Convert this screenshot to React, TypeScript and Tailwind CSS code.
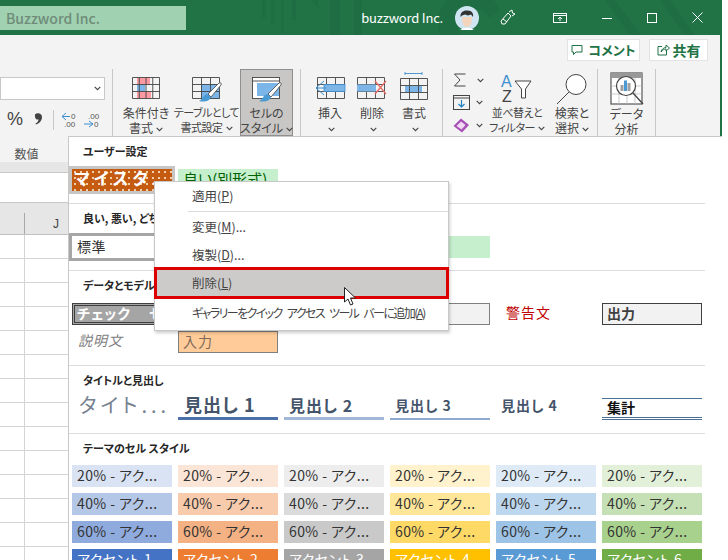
import React from "react";

const FONT = { fontFamily: '"Noto Sans CJK JP", sans-serif', fontFeatureSettings: '"palt"' };

function Chev({ className = "" }: { className?: string }) {
  return (
    <svg width="7" height="5" viewBox="0 0 7 5" className={"inline-block " + className}>
      <path d="M0.7 0.8 L3.5 3.6 L6.3 0.8" fill="none" stroke="#444" strokeWidth="1.1" />
    </svg>
  );
}

function Brush({ x, y }: { x: number; y: number }) {
  return (
    <g transform={`translate(${x} ${y})`}>
      <path d="M9 12 L20 1 C21.5 0 23 1.5 22 3 L12 15 Z" fill="#fff" stroke="#555" strokeWidth="0.9" />
      <path d="M8 12 C4 13 4 17 0 19 C5 20.5 11 19 12 15 Z" fill="#4a9bd4" />
    </g>
  );
}

function GridLines({ w = 28, h = 22, cols = 3, rows = 3 }: { w?: number; h?: number; cols?: number; rows?: number }) {
  const out: React.ReactNode[] = [];
  for (let i = 0; i <= cols; i++) out.push(<line key={"c" + i} x1={0.5 + (i * (w - 1)) / cols} x2={0.5 + (i * (w - 1)) / cols} y1={0.5} y2={h - 0.5} stroke="#444" strokeWidth="0.9" />);
  for (let i = 0; i <= rows; i++) out.push(<line key={"r" + i} y1={0.5 + (i * (h - 1)) / rows} y2={0.5 + (i * (h - 1)) / rows} x1={0.5} x2={w - 0.5} stroke="#444" strokeWidth="0.9" />);
  return <>{out}</>;
}

function CondIcon() {
  return (
    <svg width="30" height="24" viewBox="0 0 30 24">
      <g transform="translate(1 1)">
        <rect x="5" y="0.5" width="13" height="7" fill="#ff9aa2" />
        <rect x="5" y="7.5" width="8" height="7" fill="#7cb5e8" />
        <rect x="5" y="14.5" width="14" height="7" fill="#ff9aa2" />
        <GridLines cols={4} />
      </g>
    </svg>
  );
}

function TableIcon() {
  return (
    <svg width="32" height="26" viewBox="0 0 32 26">
      <g transform="translate(1 1)">
        <rect x="9" y="7" width="19" height="15" fill="#7cb5e8" />
        <GridLines />
      </g>
      <Brush x={8} y={6} />
    </svg>
  );
}

function StyleIcon() {
  return (
    <svg width="32" height="26" viewBox="0 0 32 26">
      <g transform="translate(1 1)">
        <rect x="0.5" y="0.5" width="27" height="21" fill="#fff" stroke="#444" strokeWidth="0.9" />
        <line x1="0.5" x2="27.5" y1="4" y2="4" stroke="#444" strokeWidth="0.9" />
        <rect x="5" y="6" width="22" height="13" fill="#7cb5e8" />
      </g>
      <Brush x={8} y={6} />
    </svg>
  );
}

function InsertIcon() {
  return (
    <svg width="32" height="24" viewBox="0 0 32 24">
      <g transform="translate(3 1)">
        <GridLines />
      </g>
      <rect x="10" y="8.5" width="21" height="7" fill="#7cb5e8" stroke="#3f8fcf" strokeWidth="0.8" />
      <path d="M10 5 L2 12 L10 19 M2 12 H12" fill="none" stroke="#3f8fcf" strokeWidth="1" />
    </svg>
  );
}

function DeleteIcon() {
  return (
    <svg width="32" height="24" viewBox="0 0 32 24">
      <g transform="translate(1 1)">
        <GridLines />
      </g>
      <rect x="1" y="8.5" width="19" height="7" fill="#7cb5e8" />
      <path d="M19 5 L30 18 M30 5 L19 18" stroke="#ea6b66" strokeWidth="1.3" />
    </svg>
  );
}

function FormatIcon() {
  return (
    <svg width="30" height="29" viewBox="0 0 30 29">
      <path d="M6 1.5 H23 M6 0 V3 M23 0 V3" stroke="#3f8fcf" strokeWidth="0.9" fill="none" />
      <g transform="translate(1 6)">
        <rect x="5" y="8" width="17" height="6" fill="#7cb5e8" />
        <GridLines />
      </g>
    </svg>
  );
}

function SortIcon() {
  return (
    <svg width="32" height="32" viewBox="0 0 32 32" style={{ fontFamily: '"Liberation Sans", sans-serif' }}>
      <text x="0" y="14" fontSize="16" fill="#3f8fcf">A</text>
      <text x="1" y="29" fontSize="16" fill="#444">Z</text>
      <path d="M14 8 H30 L24.5 16 V25 H20.5 V16 Z" fill="#fff" stroke="#444" strokeWidth="1" />
    </svg>
  );
}

function SearchIcon() {
  return (
    <svg width="32" height="32" viewBox="0 0 32 32">
      <circle cx="20" cy="11.5" r="10" fill="#fff" stroke="#444" strokeWidth="1" />
      <path d="M13 19 L1 31" stroke="#444" strokeWidth="1" />
    </svg>
  );
}

function AnalysisIcon() {
  return (
    <svg width="34" height="34" viewBox="0 0 34 34">
      <rect x="1" y="1" width="31" height="31" fill="#fff" stroke="#555" strokeWidth="1.2" />
      <rect x="1" y="1" width="31" height="5" fill="#999" />
      <path d="M1 14 H32 M1 22 H32 M9 6 V32 M17 6 V32 M25 6 V32" stroke="#bbb" strokeWidth="0.8" />
      <circle cx="16" cy="14" r="9.5" fill="#fff" stroke="#444" strokeWidth="1.2" />
      <rect x="10.5" y="13" width="3" height="6" fill="#a0a0a0" />
      <rect x="14" y="8.5" width="3" height="10.5" fill="#4a9bd4" />
      <rect x="17.5" y="11" width="3" height="8" fill="#a0a0a0" />
      <path d="M23 21 L33 32" stroke="#444" strokeWidth="1.3" />
    </svg>
  );
}

function RibbonBtn({ w, icon, top, bottom, chev = true, active = false, tight = false }: { w: string; icon: React.ReactNode; top?: string; bottom?: string; chev?: boolean; active?: boolean; tight?: boolean }) {
  return (
    <div className={w + " h-[67px] flex flex-col items-center leading-[15px] text-[#444] whitespace-nowrap border " + (tight ? "text-[11px] tracking-[-0.5px] " : "text-[12px] ") + (active ? "bg-[#c9c7c5] border-[#8f8f8f]" : "border-transparent")}>
      <div className="h-[36px] pt-[6px] flex items-start justify-center">{icon}</div>
      <div className="h-[15px]">{top}</div>
      <div className="h-[15px]">
        {bottom}
        {chev && <Chev className="ml-[3px] mb-[1px]" />}
      </div>
    </div>
  );
}

const TILE = "h-[22px] w-[100px] whitespace-nowrap overflow-hidden";
const TXT = "text-[14px] leading-[20px] px-[5px] tracking-[0.4px]";

const TILES = [
  ["bg-[#dae3f3]", "bg-[#fbe5d6]", "bg-[#ededed]", "bg-[#fff2cc]", "bg-[#deebf7]", "bg-[#e2f0d9]"],
  ["bg-[#b4c7e7]", "bg-[#f8cbad]", "bg-[#dbdbdb]", "bg-[#ffe699]", "bg-[#bdd7ee]", "bg-[#c5e0b4]"],
  ["bg-[#8faadc]", "bg-[#f4b183]", "bg-[#c9c9c9]", "bg-[#ffd966]", "bg-[#9dc3e6]", "bg-[#a9d18e]"],
];
const ACCENTS = ["bg-[#4472c4]", "bg-[#ed7d31]", "bg-[#a5a5a5]", "bg-[#ffc000]", "bg-[#5b9bd5]", "bg-[#70ad47]"];

const ROWGRID = "grid grid-cols-[repeat(6,100px)] gap-x-[6px] pl-[3px]";

function Label({ children }: { children: React.ReactNode }) {
  return <div className="h-[30px] pl-[14px] pb-[1px] flex items-center text-[11px] font-bold text-[#262626] whitespace-nowrap">{children}</div>;
}

function Section({ h, children }: { h: string; children: React.ReactNode }) {
  return <div className={h + " w-[636px] border-b border-[#dcdcdc]"}>{children}</div>;
}

function MenuItem({ label, k, tail = "", size = "text-[12.5px]" }: { label: string; k: string; tail?: string; size?: string }) {
  return (
    <div className={"h-[28px] pl-[37px] flex items-center text-[#444] whitespace-pre " + size}>
      {label}(<u>{k}</u>){tail}
    </div>
  );
}

export default function App() {
  return (
    <div className="relative w-[722px] h-[560px] overflow-hidden bg-white" style={FONT}>
      {/* Title bar */}
      <div className="relative h-[35px] bg-[#217346] flex items-center overflow-hidden">
        <svg className="absolute left-[260px] top-0" width="440" height="35" viewBox="0 0 440 35">
          <g fill="#1f6d42">
            <rect x="2" y="0" width="4" height="18" />
            <rect x="11" y="0" width="4" height="24" />
            <rect x="21" y="0" width="3" height="33" />
            <rect x="32" y="0" width="4" height="20" />
            <path d="M52 0 L58 8 V0 Z" />
            <rect x="70" y="0" width="10" height="35" />
            <rect x="94" y="0" width="8" height="35" />
            <path d="M180 35 A22 22 0 0 1 240 10 L230 18 A14 14 0 0 0 200 35 Z" />
            <path d="M345 0 L370 35 H380 L355 0 Z" />
            <path d="M400 0 L425 35 H435 L410 0 Z" />
          </g>
        </svg>
        <div className="relative w-[186px] h-[24px] pl-[6px] bg-[#a0d1b1] text-[14px] leading-[24px] font-medium text-[#6f8c79]">Buzzword Inc.</div>
        <div className="relative ml-auto flex items-center h-[35px]">
          <span className="text-[13px] tracking-[-0.2px] text-white mr-[12px]">buzzword Inc.</span>
          <svg width="24" height="24" viewBox="0 0 24 24" className="mr-[20px]">
            <circle cx="12" cy="12" r="12" fill="#cfe6f2" />
            <path d="M7 11 C7 18 9 21 12 21 C15 21 17 18 17 11 Z" fill="#f3d5bd" />
            <path d="M5.5 11 C5 6 9 4 12 4.5 C16 4 19 7 18 11 L16 8.5 L13 9.5 L10 8.5 L7 9.5 Z" fill="#333" />
            <path d="M5 24 A12 12 0 0 1 19 24 Z" fill="#fff" />
          </svg>
          <svg width="18" height="18" viewBox="0 0 18 18" className="mr-[36px]" fill="none" stroke="#fff" strokeWidth="1">
            <path d="M2 12 L9 4 L12 7 L6 15 H3 Z M10 3 L13 1 L13.5 4 L16 5 L13 7 M4 10 L8 13" />
          </svg>
          <svg width="14" height="12" viewBox="0 0 14 12" className="mr-[35px]" fill="none" stroke="#fff" strokeWidth="1">
            <rect x="0.5" y="1.5" width="13" height="9" />
            <path d="M0.5 3.5 H13.5 M7 9 V5 M5 7 L7 5 L9 7" />
          </svg>
          <svg width="10" height="10" viewBox="0 0 10 10" className="mr-[35px]" stroke="#fff" strokeWidth="1">
            <path d="M0 5.5 H10" />
          </svg>
          <svg width="10" height="10" viewBox="0 0 10 10" className="mr-[35px]" fill="none" stroke="#fff" strokeWidth="1">
            <rect x="0.5" y="0.5" width="9" height="9" />
          </svg>
          <svg width="11" height="11" viewBox="0 0 11 11" className="mr-[19px]" stroke="#fff" strokeWidth="1">
            <path d="M0.5 0.5 L10.5 10.5 M10.5 0.5 L0.5 10.5" />
          </svg>
        </div>
      </div>

      {/* Ribbon */}
      <div className="h-[127px] bg-[#f3f3f3] border-r-2 border-[#217346]">
        <div className="h-[34px] flex justify-end items-start pt-[4px] pr-[12px] gap-[9px]">
          <div className="h-[22px] w-[73px] bg-white border border-[#e3e3e3] flex items-center justify-center gap-[5px] text-[13px] font-bold text-[#217346]">
            <svg width="12" height="12" viewBox="0 0 12 12" fill="none" stroke="#217346" strokeWidth="1"><path d="M1 1.5 H11 V8 H5 L2.5 10.5 V8 H1 Z" /></svg>
            コメント
          </div>
          <div className="h-[22px] w-[59px] bg-white border border-[#e3e3e3] flex items-center justify-center gap-[3px] text-[14px] font-bold text-[#217346]">
            <svg width="13" height="12" viewBox="0 0 13 12" fill="none" stroke="#217346" strokeWidth="1"><path d="M5 2.5 H1 V11 H9.5 V7 M4 8 C4.5 5 7 3.5 9 3.5 V1 L12.5 4 L9 7 V5 C7 5 5.5 6 4 8 Z" /></svg>
            共有
          </div>
        </div>
        <div className="h-[67px] flex">
          {/* Number group */}
          <div className="w-[113px] h-[67px] border-r border-[#c8c8c8] shrink-0">
            <div className="mt-[8px] w-[105px] h-[23px] bg-white border border-[#c8c8c8] flex items-center justify-end pr-[3px]">
              <Chev />
            </div>
            <div className="h-[36px] pt-[3px] flex items-center text-[#444]">
              <span className="ml-[2px] w-[26px] text-[18px] text-center" style={{ fontFamily: '"Liberation Sans", sans-serif' }}>%</span>
              <svg width="9" height="12" viewBox="0 0 9 12" className="ml-[6px] -mt-[2px]">
                <path d="M1 1.5 C3 -0.5 8 0 8 4 C8 8 5 10.5 2 11.5 L1.5 10.5 C3.5 9.5 4.5 8 4.5 6.5 C2.5 7 0.5 5.5 1 1.5 Z" fill="#444" />
              </svg>
              <span className="ml-[10px] w-px h-[20px] bg-[#c8c8c8]" />
              <svg width="17" height="16" viewBox="0 0 17 16" className="ml-[7px]" style={{ fontFamily: '"Liberation Sans", sans-serif' }}>
                <path d="M5 1 L1 4.5 L5 8 M1 4.5 H9" fill="none" stroke="#3f8fcf" strokeWidth="1" />
                <text x="10" y="7" fontSize="8" fill="#555">0</text>
                <text x="3" y="15" fontSize="8" fill="#555">.00</text>
              </svg>
              <svg width="17" height="16" viewBox="0 0 17 16" className="ml-[6px]" style={{ fontFamily: '"Liberation Sans", sans-serif' }}>
                <text x="4" y="7" fontSize="8" fill="#555">.00</text>
                <path d="M5 9 L9 12 L5 15 M0 12 H9" fill="none" stroke="#3f8fcf" strokeWidth="1" />
                <text x="10" y="15" fontSize="8" fill="#555">0</text>
              </svg>
            </div>
          </div>
          {/* Styles group */}
          <div className="w-[188px] border-r border-[#c8c8c8] shrink-0 flex pl-[6px]">
            <RibbonBtn w="w-[54px]" icon={<CondIcon />} top="条件付き" bottom="書式" />
            <RibbonBtn w="w-[67px]" tight icon={<TableIcon />} top="テーブルとして" bottom="書式設定" />
            <RibbonBtn w="w-[53px]" active icon={<StyleIcon />} top="セルの" bottom="スタイル" />
          </div>
          {/* Cells group */}
          <div className="w-[142px] border-r border-[#c8c8c8] shrink-0 flex pl-[8px]">
            <RibbonBtn w="w-[42px]" icon={<InsertIcon />} top="挿入" />
            <RibbonBtn w="w-[42px]" icon={<DeleteIcon />} top="削除" />
            <RibbonBtn w="w-[42px]" icon={<div className="-mt-[4px]"><FormatIcon /></div>} top="書式" />
          </div>
          {/* Editing group */}
          <div className="w-[155px] border-r border-[#c8c8c8] shrink-0 flex">
            <div className="w-[44px] h-[67px] flex flex-col pl-[10px] pt-[3px] gap-[5px]">
              <div className="h-[16px] flex items-center text-[#444]">
                <svg width="14" height="14" viewBox="0 0 14 14" fill="none" stroke="#444" strokeWidth="1"><path d="M12.5 1 H1.5 L7 7 L1.5 13 H12.5" /></svg>
                <Chev className="ml-[10px]" />
              </div>
              <div className="h-[18px] flex items-center">
                <svg width="17" height="15" viewBox="0 0 17 15" fill="none"><rect x="0.5" y="0.5" width="16" height="14" stroke="#444" /><path d="M0.5 3 H16.5" stroke="#444" /><path d="M8.5 5 V12 M5.5 9 L8.5 12 L11.5 9" stroke="#1f7ec4" strokeWidth="1.2" /></svg>
                <Chev className="ml-[6px]" />
              </div>
              <div className="h-[18px] flex items-center">
                <svg width="17" height="15" viewBox="0 0 17 15"><path d="M0.5 8 L8 0.5 L16 7 L9 14.5 Z" fill="#a64fb4" /><path d="M3.5 8 L8 3.5 L12.5 7 L8.5 11.5 Z" fill="#f1d9f4" /></svg>
                <Chev className="ml-[6px]" />
              </div>
            </div>
            <RibbonBtn w="w-[60px]" tight icon={<div className="-mt-[3px]"><SortIcon /></div>} top="並べ替えと" bottom="フィルター" />
            <RibbonBtn w="w-[50px]" icon={<div className="-mt-[3px]"><SearchIcon /></div>} top="検索と" bottom="選択" />
          </div>
          {/* Analysis */}
          <div className="w-[58px] border-r border-[#c8c8c8] shrink-0">
            <RibbonBtn w="w-[57px]" chev={false} icon={<div className="-mt-[4px]"><AnalysisIcon /></div>} top="データ" bottom="分析" />
          </div>
        </div>
        <div className="h-[26px] w-[53px] text-[12px] leading-[36px] text-[#555] text-center">数値</div>
      </div>

      {/* Formula area */}
      <div className="h-[11px] bg-[#e6e6e6] border-b border-[#c8c8c8]" />
      <div className="h-[30px] bg-white border-b border-[#c8c8c8]" />
      {/* Column header */}
      <div className="h-[32px] bg-[#e6e6e6] border-b border-[#c0c0c0] flex">
        <div className="w-[25px] mt-[10px] border-r border-[#a8a8a8]" />
        <div className="w-[35px] pt-[13px] text-[12px] leading-[16px] text-[#444] text-right pr-[1px]" style={{ fontFamily: '"Liberation Sans", sans-serif' }}>J</div>
      </div>
      {/* Grid */}
      <div>
        {Array.from({ length: 14 }).map((_, i) => (
          <div key={i} className="h-[24px] border-b border-[#d4d4d4] flex">
            <div className="w-[25px] border-r border-[#d4d4d4]" />
          </div>
        ))}
      </div>

      {/* Style gallery panel */}
      <div className="absolute left-[68px] top-[136px] w-[655px] h-[424px] bg-white border-l border-t border-r border-[#c8c8c8] text-[#333]">
        <Section h="h-[67px]">
          <Label>ユーザー設定</Label>
          <div className={ROWGRID + " pt-[2px]"}>
            <div className={TILE + " outline-[3px] outline-[#c8c6c4] bg-[#c55a11] text-white font-bold text-[17px] leading-[18px] pl-[2px] tracking-[4px] bg-[radial-gradient(#f3cfa9_1px,transparent_1px)] bg-[length:6px_6px]"}>マイスタ...</div>
            <div className={TILE + " bg-[#c6efce] text-[#006100] text-[15px] leading-[20px] px-[5px]"}>良い(別形式)</div>
          </div>
        </Section>
        <Section h="h-[67px]">
          <Label>良い, 悪い, どちらでもない</Label>
          <div className={ROWGRID + " pt-[2px]"}>
            <div className={TILE + " outline-[3px] outline-[#a6a6a6] bg-white " + TXT}>標準</div>
            <div className={TILE + " bg-[#ffc7ce]"} />
            <div className={TILE + " bg-[#ffeb9c]"} />
            <div className={TILE + " bg-[#c6efce]"} />
          </div>
        </Section>
        <Section h="h-[95px]">
          <Label>データとモデル</Label>
          <div className={ROWGRID + " pt-[2px] gap-y-[6px]"}>
            <div className={TILE + " bg-[#a5a5a5] border-[3px] border-double border-[#3f3f3f] text-white font-bold text-[14px] leading-[15px] px-[2px] tracking-[1px] [word-spacing:14px]"}>チェック セル</div>
            <div className={TILE + " bg-[#f2f2f2] border border-[#7f7f7f]"} />
            <div className={TILE + " bg-[#f2f2f2] border border-[#7f7f7f]"} />
            <div className={TILE + " bg-[#f2f2f2] border border-[#7f7f7f]"} />
            <div className={TILE + " text-[#c00000] text-[14px] leading-[18px] tracking-[1px] pl-[10px]"}>警告文</div>
            <div className={TILE + " bg-[#f2f2f2] border border-[#3f3f3f] font-bold text-[#3f3f3f] text-[14px] leading-[18px] px-[4px]"}>出力</div>
            <div className={TILE + " italic text-[#7f7f7f] text-[14px] leading-[18px] pl-[6px] tracking-[1px]"}>説明文</div>
            <div className={TILE + " bg-[#ffcc99] border border-[#7f7f7f] text-[#7f6a5a] text-[14px] leading-[18px] px-[4px] tracking-[1px]"}>入力</div>
          </div>
        </Section>
        <Section h="h-[68px]">
          <Label>タイトルと見出し</Label>
          <div className={ROWGRID + " -mt-[4px]"}>
            <div className="h-[28px] pl-[7px] text-[20px] leading-[26px] tracking-[4px] text-[#76818f] whitespace-nowrap">タイト...</div>
            <div className="h-[28px] px-[6px] text-[18px] leading-[25px] tracking-[1px] font-bold text-[#44546a] border-b-[3px] border-[#4a72a8] whitespace-nowrap">見出し 1</div>
            <div className="h-[28px] px-[5px] text-[16px] leading-[26px] tracking-[1px] font-bold text-[#44546a] border-b-[3px] border-[#a3b7d6] whitespace-nowrap">見出し 2</div>
            <div className="h-[28px] px-[5px] text-[14px] leading-[27px] tracking-[1px] font-bold text-[#44546a] border-b-2 border-[#8eaad0] whitespace-nowrap">見出し 3</div>
            <div className="h-[28px] px-[5px] text-[14px] leading-[27px] tracking-[1px] font-bold text-[#44546a] whitespace-nowrap">見出し 4</div>
            <div className="h-[28px] pt-[6px]">
              <div className="h-[22px] px-[5px] border-t border-b-[3px] [border-bottom-style:double] border-[#4a6f96] text-[14px] leading-[16px] font-bold text-[#111] whitespace-nowrap">集計</div>
            </div>
          </div>
        </Section>
        <div>
          <Label>テーマのセル スタイル</Label>
          <div className={ROWGRID + " pt-[1px] gap-y-[6px]"}>
            {TILES.map((row, r) =>
              row.map((c, i) => (
                <div key={r + "-" + i} className={TILE + " " + c + " text-[#333] " + TXT}>
                  {["20", "40", "60"][r]}% - アク...
                </div>
              ))
            )}
            {ACCENTS.map((c, i) => (
              <div key={i} className={TILE + " " + c + " text-white " + TXT}>
                アクセント {i + 1}
              </div>
            ))}
          </div>
        </div>
      </div>

      {/* Context menu */}
      <div className="absolute left-[154px] top-[181px] w-[295px] h-[150px] bg-white border border-[#c8c8c8] shadow-[1px_2px_3px_rgba(0,0,0,0.2)]">
        <MenuItem label="適用" k="P" />
        <div className="ml-[33px] h-px bg-[#dcdcdc] my-[1px]" />
        <MenuItem label="変更" k="M" tail="..." />
        <MenuItem label="複製" k="D" tail="..." />
        <div className="-mt-[2px] -mx-px h-[32px] pl-[35px] bg-[#cdcbca] border-[3px] border-[#dd0000] flex items-center text-[12.5px] text-[#444]">
          削除(<u>L</u>)
        </div>
        <MenuItem label="ギャラリーをクイック アクセス ツール バーに追加" k="A" size="text-[12px] tracking-[-1.6px] [word-spacing:4px]" />
      </div>

      {/* Mouse pointer */}
      <svg className="absolute left-[344px] top-[287px]" width="13" height="19" viewBox="0 0 13 19">
        <path d="M0.5 0.5 V15 L4 12 L6.5 18 L9 17 L6.5 11 H11.5 Z" fill="#fff" stroke="#222" strokeWidth="1" />
      </svg>
    </div>
  );
}
